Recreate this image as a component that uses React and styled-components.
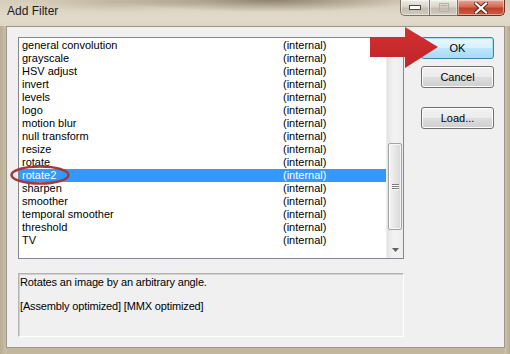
import React from "react";
import styled, { createGlobalStyle } from "styled-components";

const Global = createGlobalStyle`
  html, body { margin: 0; padding: 0; background: #c9bda5; }
  body { font-family: "Liberation Sans", Arial, sans-serif; }
`;

const Window = styled.div`
  position: relative;
  width: 510px;
  height: 354px;
  display: flex;
  flex-direction: column;
  overflow: hidden;
  background:
    linear-gradient(to right, #b9ad93 0px, #cabfa7 6px, transparent 7px),
    linear-gradient(to left, #b6aa90 0px, #cdc2ab 5px, transparent 6px),
    linear-gradient(to bottom, #d9d1c0 0px, #d3c9b5 200px, #c3b79e 354px);
`;

const TitleBar = styled.div`
  height: 26px;
  display: flex;
  align-items: flex-start;
  background:
    radial-gradient(ellipse 150px 12px at 270px 0px, rgba(85, 68, 48, 0.55), rgba(85, 68, 48, 0) 100%),
    radial-gradient(ellipse 90px 10px at 120px 2px, rgba(120, 100, 75, 0.25), rgba(120, 100, 75, 0) 100%),
    linear-gradient(to bottom, #d6cdb9 0%, #e2dbcc 70%, #ddd5c4 100%);
`;

const Title = styled.div`
  padding: 4px 0 0 7px;
  font-size: 12px;
  line-height: 15px;
  color: #1c1c1c;
`;

const Controls = styled.div`
  margin-left: auto;
  margin-right: 5px;
  display: flex;
  height: 16px;
`;

const CtrlBtn = styled.div`
  width: ${(p) => p.$w}px;
  height: 15px;
  display: flex;
  align-items: center;
  justify-content: center;
  border: 1px solid ${(p) => (p.$close ? "#6f3024" : "#7a7465")};
  border-top: none;
  border-left: ${(p) => (p.$first ? "1px solid #7a7465" : "none")};
  border-radius: ${(p) => (p.$first ? "0 0 0 5px" : p.$close ? "0 0 5px 0" : "0")};
  background: ${(p) =>
    p.$close
      ? "linear-gradient(to bottom, #e9a595 0%, #d46a55 45%, #c0402a 55%, #cf5b3f 100%)"
      : "linear-gradient(to bottom, #efece6 0%, #d9d4ca 45%, #c4bcae 55%, #d2cbbe 100%)"};
  box-shadow: inset 0 0 0 1px rgba(255, 255, 255, 0.45);
`;

const Frame = styled.div`
  flex: 1;
  display: flex;
  padding: 0 5px 6px 6px;
`;

const Client = styled.div`
  flex: 1;
  display: flex;
  align-items: flex-start;
  background: #f0f0f0;
  border: 1px solid #9d968a;
  padding: 10px 10px 0 11px;
`;

const LeftCol = styled.div`
  width: 386px;
  display: flex;
  flex-direction: column;
  gap: 14px;
`;

const ListBox = styled.div`
  height: 222px;
  box-sizing: border-box;
  border: 1px solid #828790;
  background: #ffffff;
  display: flex;
`;

const Rows = styled.div`
  flex: 1;
  padding-top: 1px;
`;

const Row = styled.div`
  display: grid;
  grid-template-columns: 261px 1fr;
  height: 13px;
  line-height: 13px;
  padding-left: 3px;
  font-size: 11px;
  color: ${(p) => (p.$sel ? "#ffffff" : "#000000")};
  background: ${(p) => (p.$sel ? "#3399ff" : "transparent")};
  white-space: nowrap;
`;

const ScrollBar = styled.div`
  width: 17px;
  display: flex;
  flex-direction: column;
  background: linear-gradient(to right, #e3e3e3, #f2f2f2 40%, #eeeeee);
  border-left: 1px solid #ececec;
  box-sizing: border-box;
`;

const ScrollBtn = styled.div`
  height: 17px;
  display: flex;
  align-items: center;
  justify-content: center;
`;

const Track = styled.div`
  flex: 1;
  padding: 0 1px;
`;

const Thumb = styled.div`
  margin-top: ${(p) => p.$offset}px;
  height: ${(p) => p.$size}px;
  box-sizing: border-box;
  border: 1px solid #a3a3a3;
  border-radius: 2px;
  background: linear-gradient(to right, #f4f4f4 0%, #e8e8e8 45%, #d8d8d8 100%);
  box-shadow: inset 0 0 0 1px rgba(255, 255, 255, 0.7);
  display: flex;
  align-items: center;
  justify-content: center;
`;

const Grip = styled.div`
  width: 7px;
  display: flex;
  flex-direction: column;
  gap: 1px;
  & > span {
    display: block;
    height: 1px;
    background: #7a7a7a;
    box-shadow: 0 1px 0 #ffffff;
  }
`;

const DescBox = styled.div`
  height: 64px;
  box-sizing: border-box;
  border-top: 1px solid #b4b4b4;
  border-left: 1px solid #b4b4b4;
  border-right: 1px solid #ffffff;
  border-bottom: 1px solid #ffffff;
  box-shadow: 1px 1px 0 #d0d0d0 inset;
  padding: 2px 0 0 1px;
  font-size: 11px;
  line-height: 13px;
  letter-spacing: -0.15px;
  color: #000;
`;

const DescLine = styled.div`
  margin-top: ${(p) => p.$gap || 0}px;
`;

const ButtonCol = styled.div`
  margin-left: 17px;
  width: 73px;
  display: flex;
  flex-direction: column;
`;

const Button = styled.div`
  height: 22px;
  margin-top: ${(p) => p.$gap || 0}px;
  box-sizing: border-box;
  display: flex;
  align-items: center;
  justify-content: center;
  font-size: 11px;
  color: #000;
  border-radius: 3px;
  border: 1px solid ${(p) => (p.$default ? "#3c7fb1" : "#707070")};
  background: ${(p) =>
    p.$default
      ? "linear-gradient(to bottom, #eaf6fd 0%, #d9f0fc 50%, #bee6fd 51%, #a7d9f5 100%)"
      : "linear-gradient(to bottom, #f2f2f2 0%, #ebebeb 50%, #dddddd 51%, #cfcfcf 100%)"};
  box-shadow: inset 0 0 0 1px ${(p) => (p.$default ? "#9fe3fd" : "#fcfcfc")};
`;

const Overlay = styled.svg`
  position: absolute;
  left: 0;
  top: 0;
  pointer-events: none;
`;

const items = [
  "general convolution",
  "grayscale",
  "HSV adjust",
  "invert",
  "levels",
  "logo",
  "motion blur",
  "null transform",
  "resize",
  "rotate",
  "rotate2",
  "sharpen",
  "smoother",
  "temporal smoother",
  "threshold",
  "TV",
];

export default function App() {
  return (
    <>
      <Global />
      <Window>
        <TitleBar>
          <Title>Add Filter</Title>
          <Controls>
            <CtrlBtn $w={28} $first>
              <svg width="12" height="5" viewBox="0 0 12 5">
                <rect x="0.5" y="0.5" width="11" height="4" fill="#ffffff" stroke="#4a4a4a" />
              </svg>
            </CtrlBtn>
            <CtrlBtn $w={27}>
              <svg width="10" height="9" viewBox="0 0 10 9">
                <rect x="0.5" y="0.5" width="9" height="8" fill="none" stroke="#b5b0a6" />
                <rect x="1.5" y="2" width="7" height="1.2" fill="#b5b0a6" />
              </svg>
            </CtrlBtn>
            <CtrlBtn $w={46} $close>
              <svg width="14" height="12" viewBox="0 0 14 12">
                <path d="M2 1.5 L12 10.5 M12 1.5 L2 10.5" stroke="#5a2418" strokeWidth="4" strokeLinecap="square" />
                <path d="M2 1.5 L12 10.5 M12 1.5 L2 10.5" stroke="#ffffff" strokeWidth="2.2" strokeLinecap="square" />
              </svg>
            </CtrlBtn>
          </Controls>
        </TitleBar>
        <Frame>
          <Client>
            <LeftCol>
              <ListBox>
                <Rows>
                  {items.map((name) => (
                    <Row key={name} $sel={name === "rotate2"}>
                      <span>{name}</span>
                      <span>(internal)</span>
                    </Row>
                  ))}
                </Rows>
                <ScrollBar>
                  <ScrollBtn>
                    <svg width="7" height="4" viewBox="0 0 7 4">
                      <path d="M0 4 L3.5 0 L7 4 Z" fill="#606060" />
                    </svg>
                  </ScrollBtn>
                  <Track>
                    <Thumb $offset={88} $size={87}>
                      <Grip>
                        <span />
                        <span />
                        <span />
                      </Grip>
                    </Thumb>
                  </Track>
                  <ScrollBtn>
                    <svg width="7" height="4" viewBox="0 0 7 4">
                      <path d="M0 0 L7 0 L3.5 4 Z" fill="#606060" />
                    </svg>
                  </ScrollBtn>
                </ScrollBar>
              </ListBox>
              <DescBox>
                <DescLine>Rotates an image by an arbitrary angle.</DescLine>
                <DescLine $gap={11}>[Assembly optimized] [MMX optimized]</DescLine>
              </DescBox>
            </LeftCol>
            <ButtonCol>
              <Button $default>OK</Button>
              <Button $gap={7}>Cancel</Button>
              <Button $gap={19}>Load...</Button>
            </ButtonCol>
          </Client>
        </Frame>
        <Overlay width="510" height="354" viewBox="0 0 510 354">
          <defs>
            <linearGradient id="arrowFill" x1="0" y1="0" x2="0" y2="1">
              <stop offset="0" stopColor="#d2302f" />
              <stop offset="1" stopColor="#c0252a" />
            </linearGradient>
          </defs>
          <path d="M370 37 L405 37 L405 27 L438 47 L405 68 L405 57 L370 57 Z" fill="url(#arrowFill)" />
          <ellipse cx="40" cy="175" rx="28.5" ry="8.5" fill="none" stroke="#a3393a" strokeWidth="2.5" />
        </Overlay>
      </Window>
    </>
  );
}
